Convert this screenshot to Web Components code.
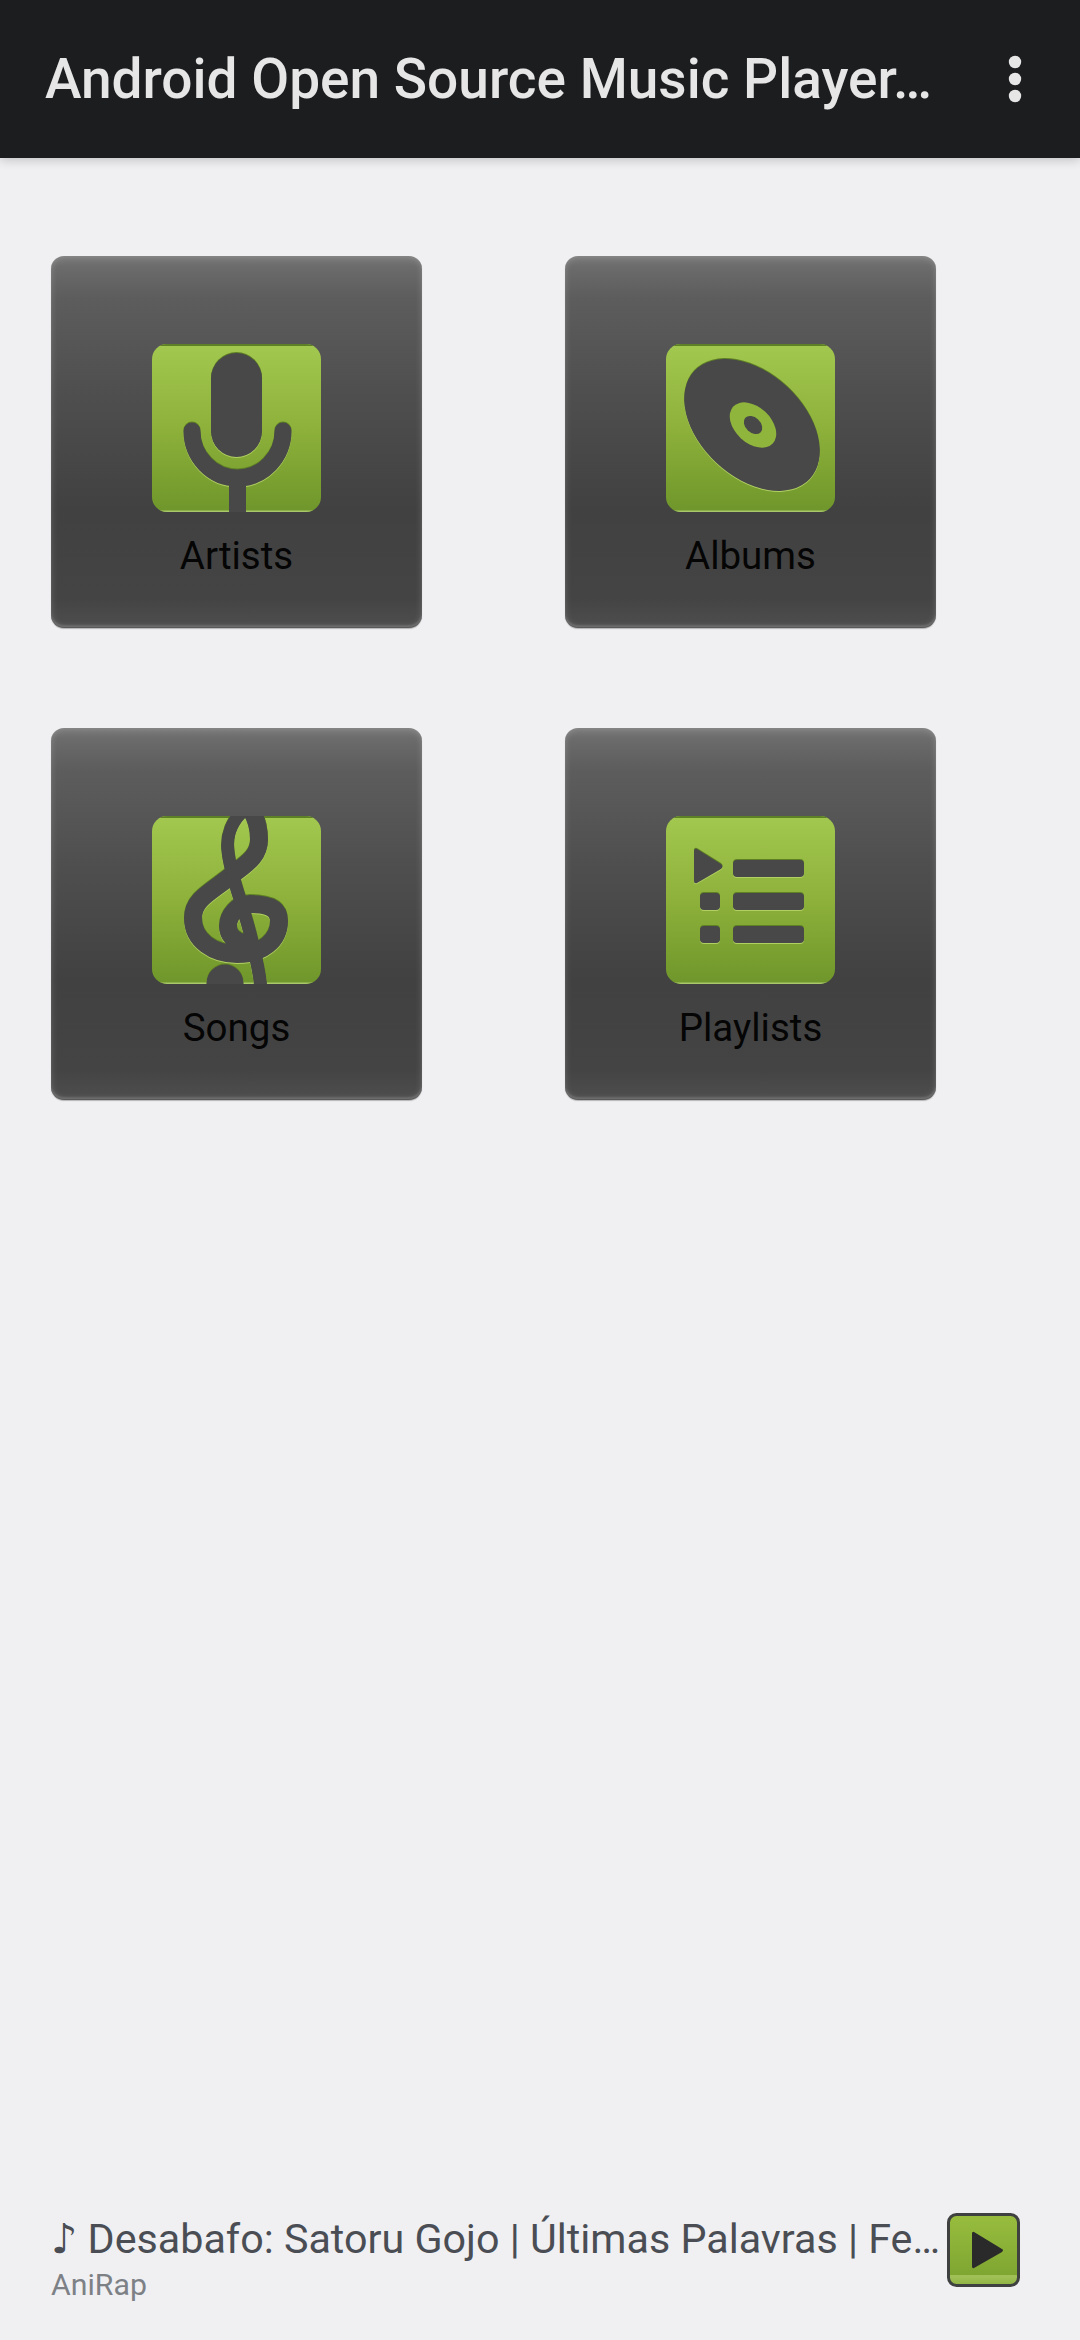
<!DOCTYPE html>
<html lang="en">
<head>
<meta charset="utf-8">
<title>Android Open Source Music Player</title>
<style>
html,body{margin:0;padding:0;height:100%}
body{width:1080px;height:2340px;background:#f0f0f3;font-family:Roboto,"Noto Sans",sans-serif;display:flex;flex-direction:column;overflow:hidden}
</style>
</head>
<body>
<app-bar>Android Open Source Music Player…</app-bar>
<tile-grid>
  <tile-button><tile-icon slot="icon" kind="mic"></tile-icon>Artists</tile-button>
  <tile-button><tile-icon slot="icon" kind="disc"></tile-icon>Albums</tile-button>
  <tile-button><tile-icon slot="icon" kind="clef"></tile-icon>Songs</tile-button>
  <tile-button><tile-icon slot="icon" kind="list"></tile-icon>Playlists</tile-button>
</tile-grid>
<now-playing>
  <span slot="title">♪ Desabafo: Satoru Gojo | Últimas Palavras | Fe…</span>
  <span slot="artist">AniRap</span>
</now-playing>
<script>
function shell(css, html){
  return class extends HTMLElement{
    constructor(){super();this.attachShadow({mode:'open'}).innerHTML='<style>'+css+'</style>'+html;}
  };
}
customElements.define('app-bar',shell(`
  :host{display:flex;align-items:center;flex:none;height:158px;box-sizing:border-box;padding:0 53px 0 45px;background:#1c1d1f;color:#e6e6e6;position:relative;z-index:1;box-shadow:0 2px 10px rgba(0,0,0,.2)}
  .t{flex:1;min-width:0;font:500 55px/64px Roboto,sans-serif;white-space:nowrap;overflow:hidden}
  svg{display:block;flex:none}
`,`<div class="t"><slot></slot></div>
<svg width="24" height="60" viewBox="0 0 24 60" fill="#e6e6e6"><circle cx="12" cy="13" r="6.2"/><circle cx="12" cy="30" r="6.2"/><circle cx="12" cy="47" r="6.2"/></svg>`));

customElements.define('tile-grid',shell(`
  :host{display:grid;flex:1;grid-template-columns:371px 371px;grid-auto-rows:372px;column-gap:143px;row-gap:100px;align-content:start;padding:98px 0 0 51px}
`,`<slot></slot>`));

customElements.define('tile-button',shell(`
  :host{display:flex;flex-direction:column;align-items:center;box-sizing:border-box;padding-top:88px;border-radius:13px;color:#050505;
    font:400 38.5px/46px Roboto,sans-serif;
    background:linear-gradient(#7a7a7a 0,#6b6b6b 3%,#5d5d5d 11%,#4f4f4f 36%,#414141 68%,#444 92%,#4e4e4e 100%);
    box-shadow:inset 0 0 7px rgba(255,255,255,.2),inset 0 -3px 2px rgba(255,255,255,.12),inset 0 -1px 0 rgba(0,0,0,.35),0 1px 1px rgba(0,0,0,.25)}
  .l{margin-top:21px}
`,`<slot name="icon"></slot><div class="l"><slot></slot></div>`));

const glyphs={
 mic:`<rect x="59" y="9" width="51" height="104" rx="25.5"/>
      <path d="M40 87A45.5 47 0 0 0 131 87" fill="none" stroke="#484848" stroke-width="17" stroke-linecap="round"/>
      <rect x="77" y="128" width="17" height="45"/>`,
 disc:`<path fill-rule="evenodd" d="M0 0Z"/><g transform="translate(86 81) rotate(43)"><ellipse rx="79" ry="52"/></g>
      <g transform="translate(87 81) rotate(43)"><ellipse rx="27" ry="18" fill="#8fb53c"/><ellipse rx="10.5" ry="7.5"/></g>`,
 clef:`<g fill="none" stroke="#484848" stroke-linecap="round">
        <path stroke-width="18" d="M99 -6C106 5 107 14 107 24C107 42 92 49 75 63C55 78 41 85 41 102C41 125 62 138 85 138C110 138 127 125 127 105C127 90 112 88 98 88C85 88 76 100 76 110C76 120 83 125 91 127"/>
        <path stroke-width="13" d="M92 -6C80 5 74 20 76 35C78 60 92 90 100 125C104 145 108 155 109 175"/>
      </g>
      <circle cx="73" cy="167" r="18.5"/>`,
 list:`<path d="M31 33L55 48Q58 50.500 55 53L31 67Q28 68 28 65V35Q28 32 31 33Z"/>
      <rect x="67" y="44" width="71" height="17" rx="4"/><rect x="67" y="77" width="71" height="17" rx="4"/><rect x="67" y="110" width="71" height="17" rx="4"/>
      <rect x="34" y="77" width="20" height="17" rx="4"/><rect x="34" y="110" width="20" height="17" rx="4"/>`
};
class TileIcon extends HTMLElement{
  constructor(){super();this.attachShadow({mode:'open'});}
  connectedCallback(){
    const g=glyphs[this.getAttribute('kind')]||'';
    this.shadowRoot.innerHTML=`<style>:host{display:block;width:169px;height:168px}svg{display:block}</style>
    <svg width="169" height="168" viewBox="0 0 169 168">
      <defs>
        <linearGradient id="g" x1="0" y1="0" x2="0" y2="1"><stop offset="0" stop-color="#a3c850"/><stop offset=".5" stop-color="#8db13a"/><stop offset="1" stop-color="#6f962b"/></linearGradient>
        <clipPath id="c"><rect width="169" height="168" rx="15"/></clipPath>
      </defs>
      <g clip-path="url(#c)">
        <rect width="169" height="168" fill="url(#g)"/>
        <rect width="169" height="2" fill="#5d7f25"/>
        <rect y="166.500" width="169" height="1.500" fill="#a9c86a"/>
        <g fill="#484848" style="filter:drop-shadow(0 -1px .6px #5f8124) drop-shadow(0 1px .6px #b1d063)">${g}</g>
      </g>
    </svg>`;
  }
}
customElements.define('tile-icon',TileIcon);

customElements.define('now-playing',shell(`
  :host{display:flex;flex:none;align-items:flex-start;box-sizing:border-box;height:127px;padding:0 60px 0 51px}
  .txt{flex:1;min-width:0;display:flex;flex-direction:column;white-space:nowrap;overflow:hidden}
  .a{font:400 41.25px/52px Roboto,"DejaVu Sans",sans-serif;color:#4a4e54}
  .b{font:400 30.25px/40px Roboto,sans-serif;color:#7d8186}
  svg{display:block;flex:none}
`,`<div class="txt"><div class="a"><slot name="title"></slot></div><div class="b"><slot name="artist"></slot></div></div>
<svg width="73" height="74" viewBox="0 0 73 74">
  <defs><linearGradient id="p" x1="0" y1="0" x2="0" y2="1"><stop offset="0" stop-color="#98bd3e"/><stop offset=".85" stop-color="#7fa631"/><stop offset=".86" stop-color="#a3c25a"/><stop offset="1" stop-color="#8db340"/></linearGradient></defs>
  <rect x="1.500" y="1.500" width="70" height="71" rx="8" fill="url(#p)" stroke="#3f4040" stroke-width="3"/>
  <path d="M27 19L55 36Q57 37 55 39L27 55Q25 56 25 53V21Q25 18 27 19Z" fill="#2a2a2a"/>
</svg>`));
</script>
</body>
</html>
